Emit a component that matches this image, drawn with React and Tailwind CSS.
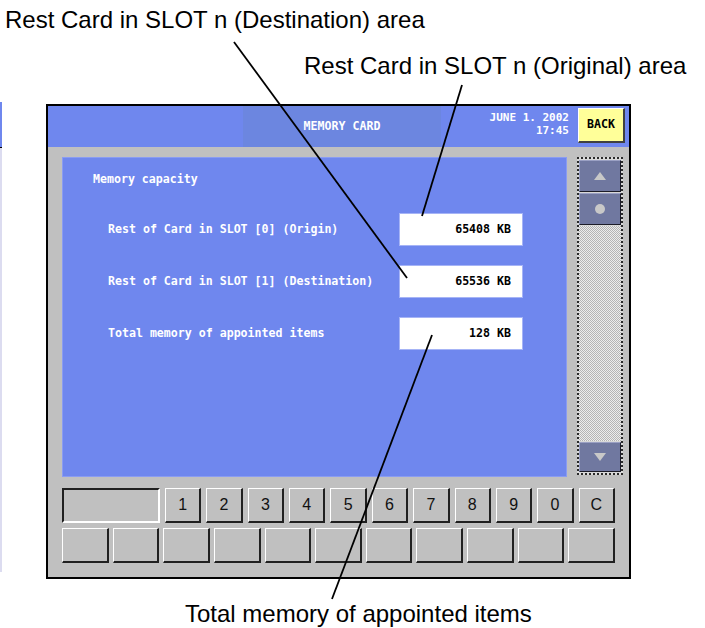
import React from "react";

const mono = { fontFamily: '"DejaVu Sans Mono", "Liberation Mono", monospace' };

function RaisedKey({ children }) {
  return (
    <div className="flex items-center justify-center bg-[#c0c0c0] border-t border-l border-t-white border-l-white border-b-2 border-r-2 border-b-[#202020] border-r-[#202020] text-[16px] text-[#111]"
      style={{ fontFamily: '"Liberation Sans Narrow", "Liberation Sans", Arial, sans-serif' }}>
      {children}
    </div>
  );
}

function Row({ label, value }) {
  return (
    <div className="flex items-center h-[33px]">
      <div className="w-[336px] shrink-0 pl-[45px] text-white font-bold text-[11.6px] whitespace-pre" style={mono}>{label}</div>
      <div className="w-[124px] shrink-0 h-[33px] bg-white border border-[#a6b4f6] flex items-center justify-end pr-[11px] text-black font-bold text-[11.6px] whitespace-pre" style={mono}>{value}</div>
    </div>
  );
}

function ScrollBtn({ children, h }) {
  return (
    <div className={`${h} w-full bg-[#7078a0] border-t border-l border-t-[#9aa0c4] border-l-[#9aa0c4] border-b border-r border-b-[#1c1c28] border-r-[#1c1c28] flex items-center justify-center`}>
      {children}
    </div>
  );
}

export default function App() {
  const ann = { fontFamily: '"Liberation Sans", Arial, sans-serif' };
  return (
    <div className="relative w-[705px] h-[628px] bg-white overflow-hidden text-black">
      {/* cut-off strip at left edge */}
      <div className="absolute left-0 top-[102px] w-[2px] h-[45px] bg-[#6f87ee]" />
      <div className="absolute left-0 top-[147px] w-[2px] h-[1px] bg-black" />
      <div className="absolute left-0 top-[148px] w-[2px] h-[424px] bg-[#dcdcf0]" />

      <div className="pt-[6px] pl-[5px] text-[24px] leading-[27px] whitespace-nowrap" style={ann}>
        Rest Card in SLOT n (Destination) area
      </div>
      <div className="mt-[19px] pl-[304px] text-[24px] leading-[27px] whitespace-nowrap" style={ann}>
        Rest Card in SLOT n (Original) area
      </div>

      {/* device screen */}
      <div className="mt-[25px] ml-[46px] w-[585px] h-[475px] border-2 border-black bg-[#c0c0c0] flex flex-col">
        {/* header */}
        <div className="h-[41px] bg-[#6f87ee] flex items-start shrink-0">
          <div className="w-[195px]" />
          <div className="w-[198px] h-full bg-[#6c86e0] flex items-center justify-center text-white font-bold text-[11.6px] whitespace-pre" style={mono}>
            MEMORY CARD
          </div>
          <div className="flex-1 mt-[5px] pr-[9px] text-right text-white font-bold text-[11px] leading-[13px] whitespace-pre" style={mono}>
            <div>JUNE 1. 2002</div>
            <div>17:45</div>
          </div>
          <div className="mt-[2px] mr-[4px] w-[47px] h-[35px] bg-[#ffff99] border-t border-l border-t-white border-l-white border-b-2 border-r-2 border-b-[#404040] border-r-[#404040] flex items-center justify-center text-black font-bold text-[11.6px]" style={mono}>
            BACK
          </div>
        </div>

        {/* body */}
        <div className="pt-[10px] pl-[14px] flex gap-[10px] shrink-0">
          <div className="w-[505px] h-[320px] bg-[#6f87ee] border border-[#8a9cf2] pt-[14px] flex flex-col">
            <div className="pl-[30px] h-[14px] leading-[14px] text-white font-bold text-[11.6px] whitespace-pre" style={mono}>Memory capacity</div>
            <div className="mt-[27px] flex flex-col gap-[19px]">
              <Row label="Rest of Card in SLOT [0] (Origin)" value="65408 KB" />
              <Row label="Rest of Card in SLOT [1] (Destination)" value="65536 KB" />
              <Row label="Total memory of appointed items" value="128 KB" />
            </div>
          </div>
          <div className="w-[46px] h-[318px] border-2 border-dotted border-[#2a2a2a] flex flex-col py-[1px] gap-[1px] bg-[#d8d8d8]">
            <ScrollBtn h="h-[32px]">
              <svg width="14" height="10" viewBox="0 0 14 10"><polygon points="7,1 13,9 1,9" fill="#c8c8c8" /></svg>
            </ScrollBtn>
            <ScrollBtn h="h-[32px]">
              <svg width="12" height="12" viewBox="0 0 12 12"><circle cx="6" cy="6" r="5" fill="#c8c8c8" /></svg>
            </ScrollBtn>
            <div className="flex-1 bg-[repeating-conic-gradient(#b4b4b4_0_25%,#ececec_0_50%)] bg-[length:2px_2px]" />
            <ScrollBtn h="h-[30px]">
              <svg width="14" height="10" viewBox="0 0 14 10"><polygon points="1,1 13,1 7,9" fill="#c8c8c8" /></svg>
            </ScrollBtn>
          </div>
        </div>

        {/* keypad */}
        <div className="mt-[11px] px-[14px] flex flex-col gap-[5px]">
          <div className="h-[35px] flex gap-[5px]">
            <div className="w-[98px] h-full bg-[#c0c0c0] border-t-2 border-l-2 border-t-[#202020] border-l-[#202020] border-b-2 border-r-2 border-b-white border-r-white" />
            <div className="flex-1 grid grid-cols-11 gap-[5px]">
              {["1", "2", "3", "4", "5", "6", "7", "8", "9", "0", "C"].map((k) => (
                <RaisedKey key={k}>{k}</RaisedKey>
              ))}
            </div>
          </div>
          <div className="h-[35px] grid grid-cols-11 gap-[4px]">
            {Array.from({ length: 11 }).map((_, i) => (
              <RaisedKey key={i} />
            ))}
          </div>
        </div>
      </div>

      <div className="mt-[21px] pl-[185px] text-[24px] leading-[27px] whitespace-nowrap" style={ann}>
        Total memory of appointed items
      </div>

      {/* annotation leader lines */}
      <svg className="absolute left-0 top-0 pointer-events-none" width="705" height="628" viewBox="0 0 705 628">
        <line x1="234" y1="42" x2="407" y2="278" stroke="black" strokeWidth="1.8" />
        <line x1="462" y1="85" x2="422" y2="216" stroke="black" strokeWidth="1.8" />
        <line x1="432" y1="335" x2="332" y2="599" stroke="black" strokeWidth="1.8" />
      </svg>
    </div>
  );
}
